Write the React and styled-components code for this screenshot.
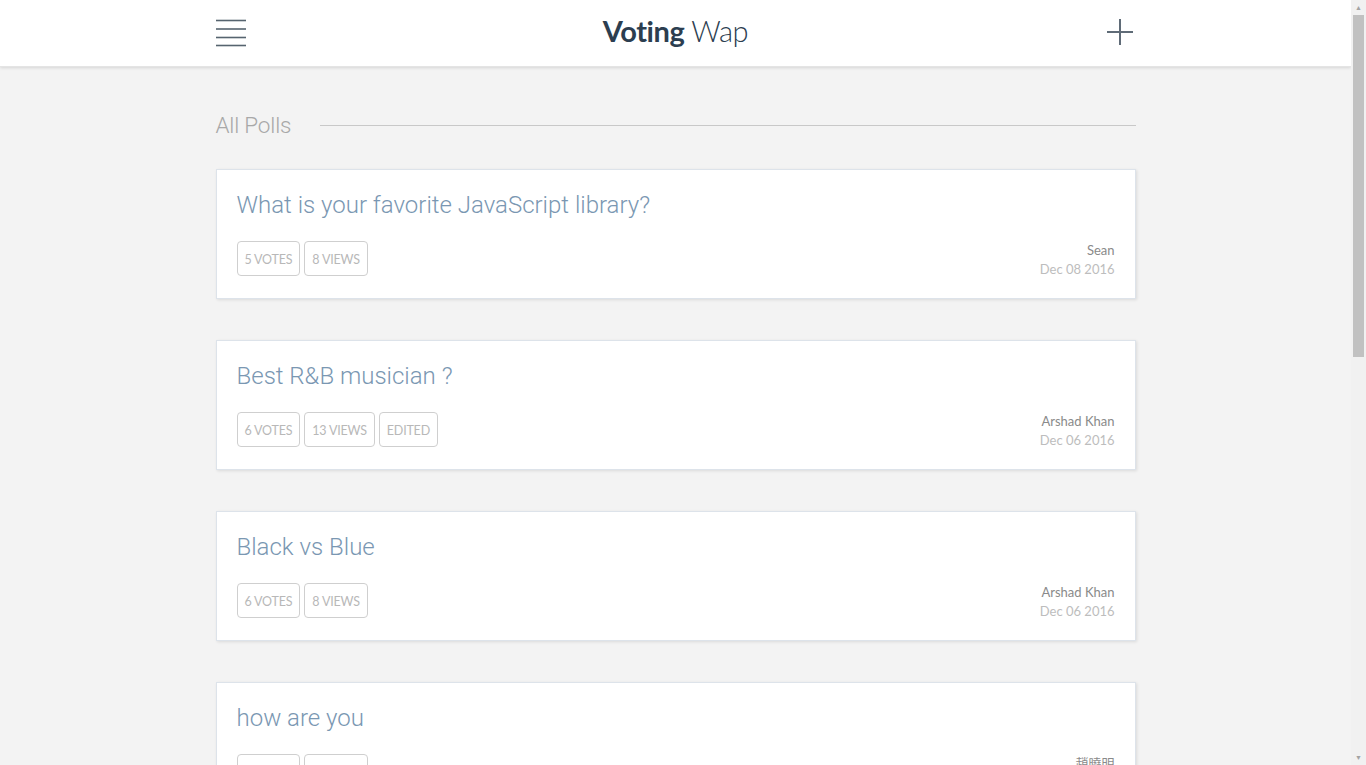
import React from 'react';
import styled, { createGlobalStyle } from 'styled-components';

const GlobalStyle = createGlobalStyle`
  html, body {
    margin: 0;
    padding: 0;
    background-color: #f3f3f3;
  }
  body {
    font-family: 'Lato', 'Noto Sans', sans-serif;
    padding-right: 15px;
  }
`;

const Header = styled.header`
  height: 67px;
  background-color: #fff;
  box-shadow: 0 1px 3px rgba(0, 0, 0, 0.12);
  border-bottom: 1px solid #e4e4e4;
  box-sizing: border-box;
`;

const Wrap = styled.div`
  width: 920px;
  margin: 0 auto;
`;

const HeaderInner = styled(Wrap)`
  height: 100%;
  display: flex;
  align-items: center;
  justify-content: space-between;
`;

const IconButton = styled.div`
  width: 30px;
  height: 30px;
  display: flex;
  align-items: center;
  justify-content: center;
  cursor: pointer;
  margin-top: -2px;
`;

const Brand = styled.h1`
  margin: -6px 0 0;
  font-family: 'Lato', 'Noto Sans', sans-serif;
  font-size: 29px;
  font-weight: 300;
  color: #2c3e50;
  letter-spacing: -0.4px;

  b {
    font-weight: 700;
  }
`;

const Main = styled(Wrap)`
  padding: 45px 0 80px;
`;

const SectionHead = styled.div`
  display: flex;
  align-items: center;
  gap: 29px;
  margin-bottom: 31px;
`;

const SectionTitle = styled.h2`
  margin: 0;
  font-family: 'Roboto', sans-serif;
  font-weight: 300;
  font-size: 22.5px;
  color: #a8a8a8;
  letter-spacing: -0.2px;
`;

const Rule = styled.div`
  flex: 1;
  height: 1px;
  background-color: #c8c8c8;
`;

const List = styled.div`
  display: flex;
  flex-direction: column;
  gap: 41px;
`;

const Card = styled.div`
  background-color: #fff;
  border: 1px solid #dde3ea;
  box-shadow: 1px 1px 3px rgba(0, 0, 0, 0.1);
  padding: 20px 20px 19px;
  height: 130px;
  box-sizing: border-box;
  display: flex;
  flex-direction: column;
  justify-content: space-between;
`;

const CardTitle = styled.h3`
  margin: 0;
  font-family: 'Roboto', sans-serif;
  font-weight: 300;
  font-size: 24px;
  line-height: 30px;
  color: #7a97b2;
`;

const CardFoot = styled.div`
  display: flex;
  align-items: center;
  justify-content: space-between;
`;

const Badges = styled.div`
  display: flex;
  gap: 4px;
`;

const Badge = styled.span`
  height: 35px;
  box-sizing: border-box;
  padding: 0 7px;
  display: flex;
  align-items: center;
  border: 1px solid #cfcfcf;
  border-radius: 4px;
  font-family: 'Lato', sans-serif;
  font-size: 12.5px;
  color: #b8b8b8;
  text-transform: uppercase;
  letter-spacing: -0.2px;
  padding-top: 1px;
`;

const Meta = styled.div`
  text-align: right;
  font-family: 'Lato', 'Noto Sans CJK SC', sans-serif;
  font-size: 13px;
  line-height: 19px;
  padding-top: 3px;
`;

const Author = styled.div`
  color: #8a8a8a;
`;

const DateText = styled.div`
  color: #bdbdbd;
`;

const ScrollTrack = styled.div`
  position: fixed;
  top: 0;
  right: 0;
  bottom: 0;
  width: 15px;
  background-color: #f1f1f1;
  display: flex;
  flex-direction: column;
  align-items: center;
`;

const ScrollArrow = styled.div`
  height: 15px;
  width: 15px;
  display: flex;
  align-items: center;
  justify-content: center;
  color: #a3a3a3;
  font-size: 7px;
  line-height: 1;
`;

const ScrollThumb = styled.div`
  width: 11px;
  height: 342px;
  background-color: #c1c1c1;
`;

const ScrollSpacer = styled.div`
  flex: 1;
`;

const polls = [
  { title: 'What is your favorite JavaScript library?', votes: 5, views: 8, author: 'Sean', date: 'Dec 08 2016' },
  { title: 'Best R&B musician ?', votes: 6, views: 13, edited: true, author: 'Arshad Khan', date: 'Dec 06 2016' },
  { title: 'Black vs Blue', votes: 6, views: 8, author: 'Arshad Khan', date: 'Dec 06 2016' },
  { title: 'how are you', votes: 3, views: 9, author: '趙曉明', date: 'Dec 05 2016' },
  { title: 'Favorite season of the year?', votes: 4, views: 11, author: 'Sean', date: 'Dec 04 2016' },
  { title: 'Tabs or spaces?', votes: 7, views: 15, author: 'Arshad Khan', date: 'Dec 03 2016' },
  { title: 'Best pizza topping', votes: 2, views: 6, author: 'Sean', date: 'Dec 02 2016' },
  { title: 'Cats or dogs?', votes: 5, views: 10, author: 'Arshad Khan', date: 'Dec 01 2016' },
];

function MenuIcon() {
  return (
    <svg width="30" height="30" viewBox="0 0 30 30">
      {[4, 12.5, 21, 29].map((y) => (
        <line key={y} x1="0" x2="30" y1={y - 0.5} y2={y - 0.5} stroke="#56646f" strokeWidth="1.6" />
      ))}
    </svg>
  );
}

function PlusIcon() {
  return (
    <svg width="28" height="28" viewBox="0 0 28 28">
      <line x1="1" x2="27" y1="14" y2="14" stroke="#5f6b77" strokeWidth="2" />
      <line x1="14" x2="14" y1="1" y2="27" stroke="#5f6b77" strokeWidth="2" />
    </svg>
  );
}

export default function App() {
  return (
    <>
      <GlobalStyle />
      <Header>
        <HeaderInner>
          <IconButton>
            <MenuIcon />
          </IconButton>
          <Brand>
            <b>Voting</b> Wap
          </Brand>
          <IconButton>
            <PlusIcon />
          </IconButton>
        </HeaderInner>
      </Header>
      <Main>
        <SectionHead>
          <SectionTitle>All Polls</SectionTitle>
          <Rule />
        </SectionHead>
        <List>
          {polls.map((p) => (
            <Card key={p.title}>
              <CardTitle>{p.title}</CardTitle>
              <CardFoot>
                <Badges>
                  <Badge>{p.votes} votes</Badge>
                  <Badge>{p.views} views</Badge>
                  {p.edited && <Badge>Edited</Badge>}
                </Badges>
                <Meta>
                  <Author>{p.author}</Author>
                  <DateText>{p.date}</DateText>
                </Meta>
              </CardFoot>
            </Card>
          ))}
        </List>
      </Main>
      <ScrollTrack>
        <ScrollArrow>▲</ScrollArrow>
        <ScrollThumb />
        <ScrollSpacer />
        <ScrollArrow>▼</ScrollArrow>
      </ScrollTrack>
    </>
  );
}
